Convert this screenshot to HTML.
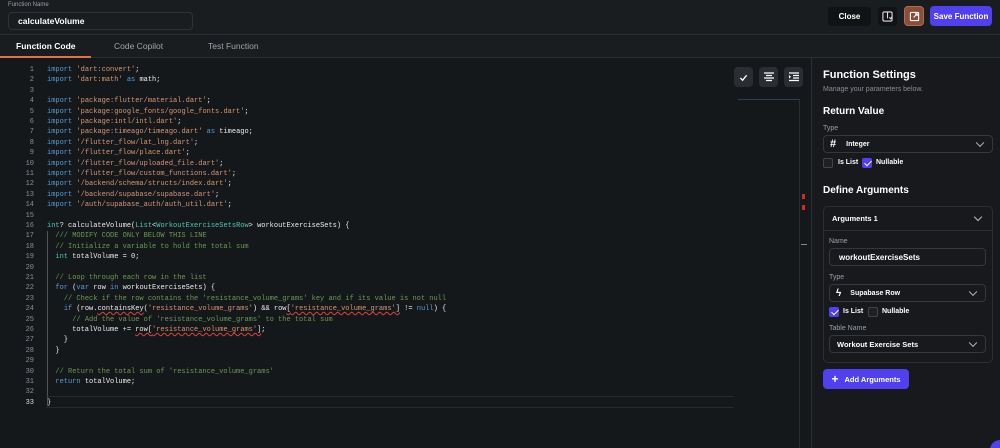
<!DOCTYPE html>
<html><head><style>
*{box-sizing:border-box;margin:0;padding:0}
html,body{width:1000px;height:448px;overflow:hidden}
body{background:#15181b;font-family:"Liberation Sans",sans-serif;color:#fff;position:relative}
.a{position:absolute}
.code{position:absolute;left:0;top:65px;font-family:"Liberation Mono",monospace;font-size:7px;line-height:10.4px;white-space:pre;color:#ececec}
.ln{position:absolute;left:0;width:34px;text-align:right;color:#8a8f95}
.tx{position:absolute;left:47px}
.k{color:#569cd6}.s{color:#d7956f}.c{color:#6a9955}.t{color:#4ec9b0}
.u{text-decoration:underline wavy #e04040;text-decoration-thickness:1px}
.btn{position:absolute;border-radius:4px;font-weight:bold;font-size:8px;display:flex;align-items:center;justify-content:center}
.lbl{position:absolute;font-size:7px;color:#9aa0a6}
.dd{position:absolute;border:1px solid #34383d;border-radius:4px;background:#17191c;font-size:7px;font-weight:bold;display:flex;align-items:center}
.chev{position:absolute;right:9px;top:50%;width:6px;height:6px;border-right:1.3px solid #bbb;border-bottom:1.3px solid #bbb;transform:translateY(-70%) rotate(45deg)}
.cb{position:absolute;width:10px;height:10px;border:1px solid #444;border-radius:2px;background:#1e2124}
.cb.on{background:#5140f0;border-color:#5140f0}
.cb.on:after{content:"";position:absolute;left:3px;top:0px;width:3px;height:6px;border-right:1.5px solid #fff;border-bottom:1.5px solid #fff;transform:rotate(45deg)}
.cbl{position:absolute;font-size:7px;font-weight:bold;line-height:10px}
</style></head><body>
<div class="a" style="left:0;top:0;width:1000px;height:35px;background:#1a1d20;border-bottom:1px solid #2c3034"></div>
<div class="a" style="left:8px;top:2px;font-size:6px;color:#9aa0a6">Function Name</div>
<div class="a" style="left:8px;top:12px;width:185px;height:18px;border:1px solid #2e3236;border-radius:4px;font-size:8.5px;font-weight:bold;padding:0 9px;line-height:16px">calculateVolume</div>
<div class="btn" style="left:828px;top:7px;width:43px;height:19px;background:#101214">Close</div>
<div class="btn" style="left:878px;top:7px;width:19px;height:19px;background:#101214"><svg width="11" height="11" viewBox="0 0 12 12" fill="none" stroke="#ddd" stroke-width="1.2"><rect x="1" y="1" width="10" height="10" rx="1.5"/><path d="M6 1v7M8 7l1.5 1.5L11 6"/></svg></div>
<div class="btn" style="left:904px;top:6px;width:20px;height:20px;background:#8a4f3a;border:1px solid #b36a4e"><svg width="11" height="11" viewBox="0 0 12 12" fill="none" stroke="#fff" stroke-width="1.2"><rect x="1.5" y="1.5" width="9" height="9" rx="1"/><path d="M5 7l4-4M6.5 3H9v2.5"/></svg></div>
<div class="btn" style="left:930px;top:6px;width:62px;height:20px;background:#5140f0">Save Function</div>
<div class="a" style="left:0;top:36px;width:1000px;height:22px;background:#1a1d20;border-bottom:1px solid #2c3034"></div>
<div class="a" style="left:16px;top:41px;font-size:8.5px;font-weight:bold">Function Code</div>
<div class="a" style="left:114px;top:41px;font-size:8.5px;color:#a0a4a8">Code Copilot</div>
<div class="a" style="left:208px;top:41px;font-size:8.5px;color:#a0a4a8">Test Function</div>
<div class="a" style="left:0;top:56px;width:91px;height:2px;background:#e0724a"></div>
<div class="code">
<div class="ln" style="top:0">1</div><div class="tx" style="top:0"><span class="k">import</span> <span class="s">'dart:convert'</span>;</div>
<div class="ln" style="top:10.4px">2</div><div class="tx" style="top:10.4px"><span class="k">import</span> <span class="s">'dart:math'</span> <span class="k">as</span> math;</div>
<div class="ln" style="top:20.8px">3</div>
<div class="ln" style="top:31.2px">4</div><div class="tx" style="top:31.2px"><span class="k">import</span> <span class="s">'package:flutter/material.dart'</span>;</div>
<div class="ln" style="top:41.6px">5</div><div class="tx" style="top:41.6px"><span class="k">import</span> <span class="s">'package:google_fonts/google_fonts.dart'</span>;</div>
<div class="ln" style="top:52px">6</div><div class="tx" style="top:52px"><span class="k">import</span> <span class="s">'package:intl/intl.dart'</span>;</div>
<div class="ln" style="top:62.4px">7</div><div class="tx" style="top:62.4px"><span class="k">import</span> <span class="s">'package:timeago/timeago.dart'</span> <span class="k">as</span> timeago;</div>
<div class="ln" style="top:72.8px">8</div><div class="tx" style="top:72.8px"><span class="k">import</span> <span class="s">'/flutter_flow/lat_lng.dart'</span>;</div>
<div class="ln" style="top:83.2px">9</div><div class="tx" style="top:83.2px"><span class="k">import</span> <span class="s">'/flutter_flow/place.dart'</span>;</div>
<div class="ln" style="top:93.6px">10</div><div class="tx" style="top:93.6px"><span class="k">import</span> <span class="s">'/flutter_flow/uploaded_file.dart'</span>;</div>
<div class="ln" style="top:104px">11</div><div class="tx" style="top:104px"><span class="k">import</span> <span class="s">'/flutter_flow/custom_functions.dart'</span>;</div>
<div class="ln" style="top:114.4px">12</div><div class="tx" style="top:114.4px"><span class="k">import</span> <span class="s">'/backend/schema/structs/index.dart'</span>;</div>
<div class="ln" style="top:124.8px">13</div><div class="tx" style="top:124.8px"><span class="k">import</span> <span class="s">'/backend/supabase/supabase.dart'</span>;</div>
<div class="ln" style="top:135.2px">14</div><div class="tx" style="top:135.2px"><span class="k">import</span> <span class="s">'/auth/supabase_auth/auth_util.dart'</span>;</div>
<div class="ln" style="top:145.6px">15</div>
<div class="ln" style="top:156px">16</div><div class="tx" style="top:156px"><span class="t">int</span>? calculateVolume(<span class="t">List</span>&lt;<span class="t">WorkoutExerciseSetsRow</span>&gt; workoutExerciseSets) {</div>
<div class="ln" style="top:166.4px">17</div><div class="tx" style="top:166.4px">  <span class="c">/// MODIFY CODE ONLY BELOW THIS LINE</span></div>
<div class="ln" style="top:176.8px">18</div><div class="tx" style="top:176.8px">  <span class="c">// Initialize a variable to hold the total sum</span></div>
<div class="ln" style="top:187.2px">19</div><div class="tx" style="top:187.2px">  <span class="t">int</span> totalVolume = 0;</div>
<div class="ln" style="top:197.6px">20</div>
<div class="ln" style="top:208px">21</div><div class="tx" style="top:208px">  <span class="c">// Loop through each row in the list</span></div>
<div class="ln" style="top:218.4px">22</div><div class="tx" style="top:218.4px">  <span class="k">for</span> (<span class="k">var</span> row <span class="k">in</span> workoutExerciseSets) {</div>
<div class="ln" style="top:228.8px">23</div><div class="tx" style="top:228.8px">    <span class="c">// Check if the row contains the 'resistance_volume_grams' key and if its value is not null</span></div>
<div class="ln" style="top:239.2px">24</div><div class="tx" style="top:239.2px">    <span class="k">if</span> (row.<span class="u">containsKey</span>(<span class="s">'resistance_volume_grams'</span>) &amp;&amp; row<span class="u">[<span class="s">'resistance_volume_grams'</span>]</span> != <span class="k">null</span>) {</div>
<div class="ln" style="top:249.6px">25</div><div class="tx" style="top:249.6px">      <span class="c">// Add the value of 'resistance_volume_grams' to the total sum</span></div>
<div class="ln" style="top:260px">26</div><div class="tx" style="top:260px">      totalVolume += <span class="u">row[<span class="s">'resistance_volume_grams'</span>]</span>;</div>
<div class="ln" style="top:270.4px">27</div><div class="tx" style="top:270.4px">    }</div>
<div class="ln" style="top:280.8px">28</div><div class="tx" style="top:280.8px">  }</div>
<div class="ln" style="top:291.2px">29</div>
<div class="ln" style="top:301.6px">30</div><div class="tx" style="top:301.6px">  <span class="c">// Return the total sum of 'resistance_volume_grams'</span></div>
<div class="ln" style="top:312px">31</div><div class="tx" style="top:312px">  <span class="k">return</span> totalVolume;</div>
<div class="ln" style="top:322.4px">32</div>
<div class="ln" style="top:332.8px;color:#ddd">33</div><div class="tx" style="top:332.8px">}</div>
</div>
<div class="a" style="left:47px;top:231px;width:1px;height:175px;background:#555"></div>
<div class="a" style="left:46px;top:396px;width:688px;height:12px;border-top:1px solid #262a2e;border-bottom:1px solid #262a2e"></div>
<div class="btn" style="left:734px;top:67px;width:19px;height:20px;background:#2a2e33"><svg width="9" height="9" viewBox="0 0 10 10" fill="none" stroke="#fff" stroke-width="1.5"><path d="M1.5 5.5l2.5 2.5 4.5-5.5"/></svg></div>
<div class="btn" style="left:759px;top:67px;width:19px;height:20px;background:#2a2e33"><svg width="10" height="10" viewBox="0 0 10 10" stroke="#fff" stroke-width="1.2"><path d="M0 1h10M2 3.5h6M0 6h10M2 8.5h6"/></svg></div>
<div class="btn" style="left:784px;top:67px;width:19px;height:20px;background:#2a2e33"><svg width="10" height="10" viewBox="0 0 10 10" stroke="#fff" stroke-width="1.2" fill="#fff"><path d="M0 1h10M4 3.5h6M4 6h6M0 8.5h10"/><path d="M0 3l2 1.8-2 1.8z" stroke="none"/></svg></div>
<div class="a" style="left:738px;top:99px;width:62px;height:1px;background:#2b4050"></div>
<div class="a" style="left:799px;top:99px;width:1px;height:349px;background:#2a2e32"></div>
<div class="a" style="left:802px;top:194px;width:3px;height:5px;background:#d02828"></div>
<div class="a" style="left:802px;top:205px;width:3px;height:5px;background:#d02828"></div>
<div class="a" style="left:801px;top:244px;width:6px;height:1px;background:#888"></div>
<div class="a" style="left:811px;top:58px;width:189px;height:390px;background:#17191c;border-left:1px solid #2c3034"></div>
<div class="a" style="left:823px;top:69px;font-size:11px;font-weight:bold">Function Settings</div>
<div class="a" style="left:823px;top:86px;font-size:7px;color:#8a8f95">Manage your parameters below.</div>
<div class="a" style="left:823px;top:106px;font-size:10px;font-weight:bold">Return Value</div>
<div class="lbl" style="left:823px;top:125px">Type</div>
<div class="dd" style="left:823px;top:135px;width:170px;height:18px"><span style="font-size:11px;margin:0 10px 0 6px">#</span>Integer<i class="chev"></i></div>
<div class="cb" style="left:823px;top:158px"></div><div class="cbl" style="left:838px;top:158px">Is List</div>
<div class="cb on" style="left:862px;top:158px"></div><div class="cbl" style="left:876px;top:158px">Nullable</div>
<div class="a" style="left:823px;top:185px;font-size:10px;font-weight:bold">Define Arguments</div>
<div class="a" style="left:823px;top:206px;width:170px;height:157px;border:1px solid #2c3034;border-radius:5px"></div>
<div class="a" style="left:832px;top:214px;font-size:7.5px;font-weight:bold">Arguments 1</div>
<i class="chev" style="position:absolute;left:975px;top:214px;right:auto;transform:rotate(45deg)"></i>
<div class="a" style="left:824px;top:230px;width:168px;height:1px;background:#2c3034"></div>
<div class="lbl" style="left:829px;top:238px">Name</div>
<div class="dd" style="left:829px;top:248px;width:157px;height:18px;padding-left:9px;font-size:8px">workoutExerciseSets</div>
<div class="lbl" style="left:829px;top:274px">Type</div>
<div class="dd" style="left:829px;top:284px;width:157px;height:18px"><span style="margin:0 9px 0 6px;font-size:10px">ϟ</span>Supabase Row<i class="chev"></i></div>
<div class="cb on" style="left:829px;top:307px"></div><div class="cbl" style="left:843px;top:307px">Is List</div>
<div class="cb" style="left:868px;top:307px"></div><div class="cbl" style="left:882px;top:307px">Nullable</div>
<div class="lbl" style="left:829px;top:325px">Table Name</div>
<div class="dd" style="left:829px;top:335px;width:157px;height:18px;padding-left:7px;font-size:7.5px">Workout Exercise Sets<i class="chev"></i></div>
<div class="btn" style="left:823px;top:369px;width:86px;height:20px;background:#5140f0;font-size:7.5px"><span style="font-size:12px;margin-right:6px">+</span>Add Arguments</div>
<div class="a" style="left:990px;top:440px;width:20px;height:20px;border-radius:50%;background:#5140f0"></div>
</body></html>
